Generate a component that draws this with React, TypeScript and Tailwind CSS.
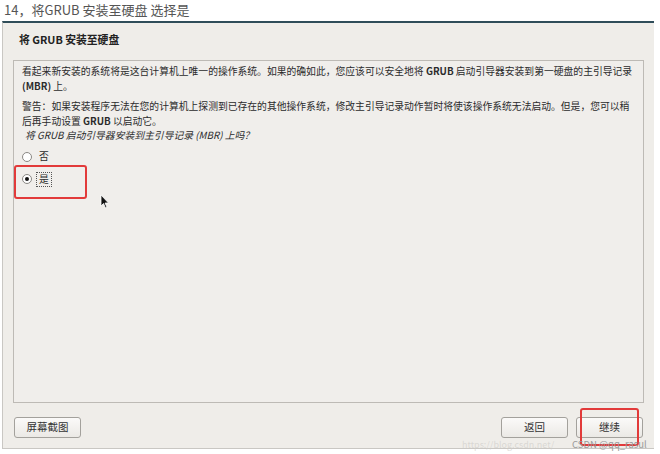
import React from 'react';

function Radio({ checked }: { checked?: boolean }) {
    return (
        <span className="w-[10px] h-[10px] rounded-full border border-[#8a8884] bg-white flex items-center justify-center shrink-0">
            {checked && <span className="w-[4px] h-[4px] rounded-full bg-[#111]" />}
        </span>
    );
}

function Button({ label }: { label: string }) {
    return (
        <button className="w-[67px] h-[21px] rounded-[3px] border border-[#a3a19c] bg-gradient-to-b from-[#fbfaf9] to-[#ebe9e5] text-[10.5px] leading-none text-[#333] flex items-center justify-center">
            {label}
        </button>
    );
}

export default function App() {
    return (
        <div className="w-[660px] h-[454px] bg-white relative overflow-hidden font-['Noto_Sans_CJK_SC','Liberation_Sans',sans-serif]">
            {/* caption above the screenshot */}
            <div className="h-[21px] pl-[4px] text-[13px] leading-[19px] text-[#555] whitespace-nowrap">
                14，将GRUB 安装至硬盘 选择是
            </div>

            {/* installer window */}
            <div className="ml-[2px] w-[652px] h-[428px] border-t-2 border-t-[#2f4d59] border-l border-l-[#c9c7c3] border-b border-b-[#c9c7c3] bg-[#efede9] flex flex-col">
                <div className="h-[37px] pl-[16px] pt-[9px] text-[10.8px] leading-[14px] font-bold text-[#222] whitespace-nowrap">
                    将 GRUB 安装至硬盘
                </div>

                <div className="ml-[10px] w-[631px] h-[343px] border border-[#bdbab5] bg-[#f0eeeb] pl-[8px] pt-[3px] text-[9.8px] leading-[14.5px] text-[#2b2b2b] whitespace-nowrap">
                    <p>
                        看起来新安装的系统将是这台计算机上唯一的操作系统。如果的确如此，您应该可以安全地将 <b>GRUB</b> 启动引导器安装到第一硬盘的主引导记录
                        <br />
                        <b>(MBR)</b> 上。
                    </p>
                    <p className="mt-[6px]">
                        警告：如果安装程序无法在您的计算机上探测到已存在的其他操作系统，修改主引导记录动作暂时将使该操作系统无法启动。但是，您可以稍
                        <br />
                        后再手动设置 <b>GRUB</b> 以启动它。
                    </p>
                    <p className="pl-[3px] italic">将 GRUB 启动引导器安装到主引导记录 (MBR) 上吗？</p>

                    <div className="mt-[7px] flex flex-col gap-[8px]">
                        <label className="flex items-center gap-[7px] h-[14px]">
                            <Radio />
                            <span>否</span>
                        </label>
                        <label className="flex items-center gap-[4px] h-[15px]">
                            <Radio checked />
                            <span className="border border-dotted border-[#555] px-[2px] leading-[13px]">是</span>
                        </label>
                    </div>
                </div>

                <div className="mt-[14px] px-[11px] flex items-center">
                    <Button label="屏幕截图" />
                    <div className="flex-1" />
                    <Button label="返回" />
                    <div className="w-[8px]" />
                    <Button label="继续" />
                </div>
            </div>

            {/* red highlight boxes */}
            <div className="absolute left-[14px] top-[165px] w-[73px] h-[34px] border-2 border-[#e23a3a] rounded-[3px]" />
            <div className="absolute left-[580px] top-[408px] w-[59px] h-[38px] border-2 border-[#e23a3a] rounded-[3px]" />

            {/* mouse pointer */}
            <svg className="absolute left-[100px] top-[194px]" width="10" height="15" viewBox="0 0 10 15">
                <path d="M1 1 L1 12 L3.5 9.5 L5.5 14 L7 13.3 L5 9 L8.5 9 Z" fill="#111" stroke="#fff" strokeWidth="0.8" />
            </svg>

            {/* watermark */}
            <div className="absolute left-[462px] top-[440px] text-[9px] leading-none text-[#d0cec9]/70 whitespace-nowrap">
                https://blog.csdn.net/
            </div>
            <div className="absolute left-[572px] top-[440px] text-[9.5px] leading-none text-[#9a9a9a] whitespace-nowrap">
                CSDN @qq_rasul
            </div>
        </div>
    );
}
